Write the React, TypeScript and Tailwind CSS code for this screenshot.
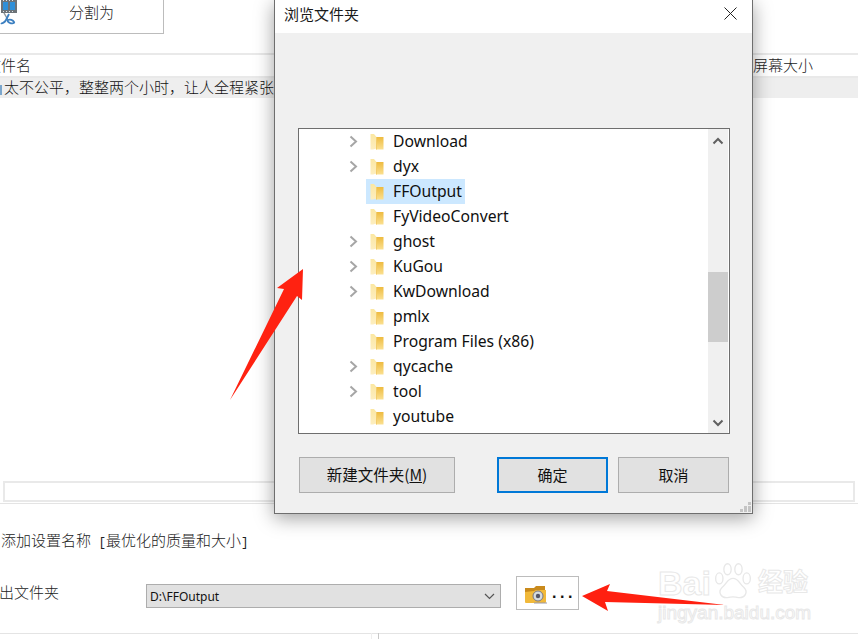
import React from "react";

const simsun = "font-['Liberation_Sans','Noto_Sans_CJK_SC',sans-serif] font-light";

function Folder() {
  return (
    <svg width="16" height="17" viewBox="0 0 16 17" className="shrink-0">
      <defs>
        <linearGradient id="fg" x1="0" y1="0" x2="0" y2="1">
          <stop offset="0" stopColor="#eebb3f" />
          <stop offset="1" stopColor="#fbe090" />
        </linearGradient>
        <linearGradient id="fl" x1="0" y1="0" x2="0" y2="1">
          <stop offset="0" stopColor="#fbe7a2" />
          <stop offset="1" stopColor="#fdeec0" />
        </linearGradient>
      </defs>
      <path d="M7 4h7.5v12.5H7z" fill="url(#fg)" />
      <path d="M1.5 1H5l2.5 3v11.5l-3.5 1H1.5z" fill="url(#fl)" />
      <path d="M7 4h1v12.5H7z" fill="#f2cc6a" />
    </svg>
  );
}

function Chevron({ show }: { show: boolean }) {
  return (
    <span className="w-[11px] h-[13px] shrink-0">
      {show && (
        <svg width="11" height="13" viewBox="0 0 11 13">
          <path d="M2.5 1.5 8 6.5 2.5 11.5" fill="none" stroke="#a6a6a6" strokeWidth="2" />
        </svg>
      )}
    </span>
  );
}

const rows: [string, boolean, boolean][] = [
  ["Download", true, false],
  ["dyx", true, false],
  ["FFOutput", false, true],
  ["FyVideoConvert", false, false],
  ["ghost", true, false],
  ["KuGou", true, false],
  ["KwDownload", true, false],
  ["pmlx", false, false],
  ["Program Files (x86)", false, false],
  ["qycache", true, false],
  ["tool", true, false],
  ["youtube", false, false],
];

function Tree() {
  return (
    <div className="ml-[23px] mt-[95px] w-[432px] h-[306px] border border-[#6e6e6e] bg-white flex overflow-hidden">
      <div className="flex-1 pl-[49px] flex flex-col">
        {rows.map(([name, chev, sel]) => (
          <div key={name} className="h-[25px] flex items-center shrink-0">
            <Chevron show={chev} />
            <div className={`ml-[7px] h-[25px] pl-[3px] pr-[3px] flex items-center gap-[8px] ${sel ? "bg-[#cce8ff]" : ""}`}>
              <Folder />
              <span className="text-[15.7px] leading-[25px] text-[#101010]">{name}</span>
            </div>
          </div>
        ))}
      </div>
      <div className="w-[20px] mr-px bg-[#f0f0f0] flex flex-col items-center relative">
        <svg width="12" height="8" viewBox="0 0 12 8" className="mt-[8px]">
          <path d="M1.5 6.5 6 2l4.5 4.5" fill="none" stroke="#606060" strokeWidth="2" />
        </svg>
        <div className="mt-[127px] w-full h-[70px] bg-[#cdcdcd]" />
        <svg width="12" height="8" viewBox="0 0 12 8" className="mt-[77px]">
          <path d="M1.5 1.5 6 6l4.5-4.5" fill="none" stroke="#606060" strokeWidth="2" />
        </svg>
      </div>
    </div>
  );
}

function Dialog() {
  return (
    <div className="absolute left-[274px] top-0 w-[479px] h-[514px] border-x border-b border-[#6e6e6e] bg-[#f0f0f0] shadow-[0_4px_18px_rgba(0,0,0,0.38)] font-normal font-['Noto_Sans','Noto_Sans_CJK_SC',sans-serif] flex flex-col">
      <div className="h-[33px] bg-white flex items-center justify-between pl-[9px] pr-[15px] shrink-0">
        <span className="text-[15px] leading-[20px] -mt-[6px] text-[#1a1a1a] font-['Noto_Sans_CJK_SC',sans-serif]">浏览文件夹</span>
        <svg width="13" height="13" viewBox="0 0 13 13" className="-mt-[7px]">
          <path d="M.5.5l12 12M12.5.5l-12 12" stroke="#222" strokeWidth="1" fill="none" />
        </svg>
      </div>
      <Tree />
      <div className="flex ml-[24px] mt-[23px] text-[15px] text-[#111] font-['Noto_Sans_CJK_SC',sans-serif]">
        <button className="w-[156px] h-[36px] border border-[#adadad] bg-[#e1e1e1] text-[15.5px]">
          新建文件夹(<span className="underline">M</span>)
        </button>
        <button className="ml-[42px] w-[111px] h-[36px] border-2 border-[#0078d7] bg-[#e1e1e1]">确定</button>
        <button className="ml-[10px] w-[111px] h-[36px] border border-[#adadad] bg-[#e1e1e1]">取消</button>
      </div>
      <svg width="12" height="12" viewBox="0 0 12 12" className="absolute right-0 bottom-0">
        <path d="M8 1h3v3H8zM4 5h3v3H4zM8 5h3v3H8zM0 8h3v3H0zM4 8h3v3H4zM8 8h3v3H8z" fill="#c4c4c4" />
      </svg>
    </div>
  );
}

function Watermark() {
  return (
    <div className="absolute left-[658px] top-[561px] w-[165px] h-[66px] text-white [-webkit-text-stroke:1px_#e8e8e8] font-['Liberation_Sans','Noto_Sans_CJK_SC',sans-serif] font-bold pointer-events-none">
      <div className="flex items-center h-[43px]">
        <span className="text-[34px] leading-none">Bai</span>
        <svg width="42" height="43" viewBox="0 0 46 43" className="ml-[1px]">
          <g fill="none" stroke="#e8e8e8" strokeWidth="1.5">
            <ellipse cx="8" cy="17" rx="4" ry="6" />
            <ellipse cx="17" cy="7" rx="4" ry="6" />
            <ellipse cx="29" cy="7" rx="4" ry="6" />
            <ellipse cx="38" cy="17" rx="4" ry="6" />
            <path d="M23 17c-6 0-7 6-12 10-5 5-1 12 6 11 4-1 8-1 12 0 7 1 11-6 6-11-5-4-6-10-12-10z" />
          </g>
        </svg>
        <span className="text-[25px] leading-none ml-[4px] whitespace-nowrap">经验</span>
      </div>
      <div className="text-[19px] leading-[20px] -mt-[1px] font-normal whitespace-nowrap">jingyan.baidu.com</div>
    </div>
  );
}

export default function App() {
  return (
    <div className={`relative w-[858px] h-[639px] overflow-hidden bg-white text-[#222] ${simsun}`}>
      <div className="w-[164px] h-[34px] border-r border-b border-[#bcbcbc] flex items-center relative">
        <svg width="18" height="26" viewBox="0 0 18 26" className="absolute left-0 top-0">
          <path d="M1 0h16v13H1z" fill="#6d7378" />
          <path d="M3 2h5v8H3zM10 2h5v8h-5z" fill="#2f8fd8" />
          <path d="M3 0h1v1H3zM6 0h1v1H6zM9 0h1v1H9zM12 0h1v1h-1zM3 11h1v1H3zM6 11h1v1H6zM9 11h1v1H9zM12 11h1v1h-1z" fill="#dfe3e6" />
          <path d="M4 13l4 7" fill="none" stroke="#8d9499" strokeWidth="1.5" />
          <path d="M9 14l-3 6c-1 2-4 4-5 3" fill="none" stroke="#3b7fc0" strokeWidth="1.8" />
          <path d="M8 20c2-1 5 0 6 2 1 1-2 2-4 1s-3-2-2-3z" fill="none" stroke="#3b7fc0" strokeWidth="1.8" />
        </svg>
        <span className="ml-[69px] text-[15px] leading-[20px] -mt-[8px]">分割为</span>
      </div>
      <div className="mt-[19px] h-[25px] border-t-2 border-b-2 border-[#e9e9e9] flex items-center text-[15px] overflow-hidden">
        <span className="-ml-[14px] mt-[1px]">文件名</span>
        <span className="ml-[722px] mt-[1px]">屏幕大小</span>
      </div>
      <div className="h-[20px] bg-[#eeeeee] flex items-center text-[15px] text-[#111]">
        <span className="w-[2px] h-[10px] mt-[3px] bg-[#7ba6cc] mr-[2px]" />
        <span className="whitespace-nowrap">太不公平，整整两个小时，让人全程紧张</span>
      </div>
      <div className="mt-[383px] mx-[3px] h-[21px] border-2 border-[#e9e9e9]" />
      <div className="mt-[1px] h-px bg-[#e4e4e4]" />
      <div className="mt-[27px] h-[20px] leading-[20px] text-[15px] whitespace-pre pl-px">
        添加设置名称<span className="font-['Liberation_Mono',monospace] text-[12.5px]"> [</span>最优化的质量和大小<span className="font-['Liberation_Mono',monospace] text-[12.5px]">]</span>
      </div>
      <div className="mt-[25px] h-[34px] flex items-start">
        <span className="-ml-[1px] w-[147px] text-[15px] leading-[20px] mt-[7px]">出文件夹</span>
        <div className="w-[355px] h-[24px] border border-[#adadad] bg-[#e1e1e1] flex items-center justify-between pl-[3px] pr-[5px] mt-[8px] font-['Noto_Sans',sans-serif] font-normal text-[12px] text-[#111]">
          <span className="mt-[2px]">D:\FFOutput</span>
          <svg width="11" height="7" viewBox="0 0 11 7">
            <path d="M1 1l4.5 4.5L10 1" fill="none" stroke="#555" strokeWidth="1.2" />
          </svg>
        </div>
        <div className="ml-[15px] w-[63px] h-[34px] border border-[#bcbcbc] flex items-center pl-[8px] gap-[5px]">
          <svg width="22" height="18" viewBox="0 0 22 18" className="shrink-0 mt-[3px]">
            <path d="M0 2h9l2-2h9v15H0z" fill="#c98a1c" />
            <path d="M0 6l9-1 2-1h10v12a1 1 0 0 1-1 1H1a1 1 0 0 1-1-1z" fill="#f1b93a" />
            <circle cx="13" cy="10" r="5" fill="#d5dbdf" stroke="#778" strokeWidth="1" />
            <circle cx="13" cy="10" r="2.2" fill="#556" />
            <path d="M9 16h13v2H9z" fill="#99a" opacity="0.5" />
          </svg>
          <span className="text-[16px] leading-none tracking-[3.6px] font-bold text-[#111] font-['Liberation_Sans',sans-serif]">...</span>
        </div>
      </div>
      <div className="mt-[23px] h-px bg-[#e4e4e4] relative">
        <div className="absolute left-[371px] top-0 w-[8px] h-[6px] border-l border-r border-l-[#eeeeee] border-r-[#c8c8c8]" />
      </div>

      <Watermark />
      <Dialog />

      <svg width="858" height="639" viewBox="0 0 858 639" className="absolute left-0 top-0 pointer-events-none">
        <path d="M303 269 277 288 284 289 230 400 297 296 302 300z" fill="#ff2211" />
        <path d="M582 596 610 584 607 591 725 605 605 602 608 611z" fill="#ff2010" />
      </svg>
    </div>
  );
}
